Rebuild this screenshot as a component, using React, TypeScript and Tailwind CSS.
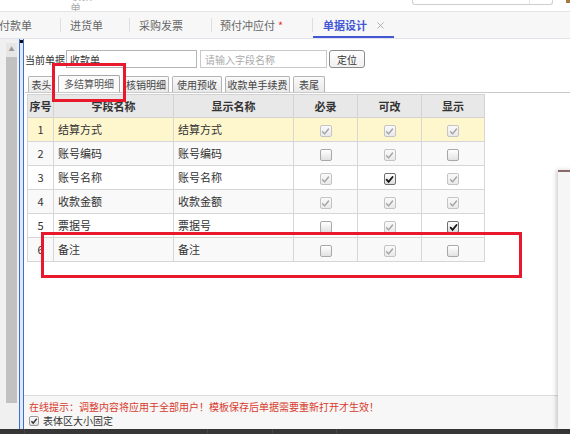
import { X } from "lucide-react";

type Cell = { on: boolean; dis: boolean };

const rows: { no: number; field: string; show: string; req: Cell; edit: Cell; vis: Cell }[] = [
  { no: 1, field: "结算方式", show: "结算方式", req: { on: true, dis: true }, edit: { on: true, dis: true }, vis: { on: true, dis: true } },
  { no: 2, field: "账号编码", show: "账号编码", req: { on: false, dis: false }, edit: { on: true, dis: true }, vis: { on: false, dis: false } },
  { no: 3, field: "账号名称", show: "账号名称", req: { on: true, dis: true }, edit: { on: true, dis: false }, vis: { on: true, dis: true } },
  { no: 4, field: "收款金额", show: "收款金额", req: { on: true, dis: true }, edit: { on: true, dis: true }, vis: { on: true, dis: true } },
  { no: 5, field: "票据号", show: "票据号", req: { on: false, dis: false }, edit: { on: true, dis: true }, vis: { on: true, dis: false } },
  { no: 6, field: "备注", show: "备注", req: { on: false, dis: false }, edit: { on: true, dis: true }, vis: { on: false, dis: false } },
];

const subTabs = [
  { label: "表头", w: "w-[27px]" },
  { label: "多结算明细", w: "w-[62px]", active: true },
  { label: "核销明细", w: "w-[46px]" },
  { label: "使用预收", w: "w-[50px]" },
  { label: "收款单手续费", w: "w-[65px]" },
  { label: "表尾", w: "w-[32px]" },
];

function Check({ on, dis }: Cell) {
  const box = dis
    ? "border-[#c4c4c4] from-[#fafafa] to-[#e9e9e9]"
    : on
      ? "border-[#6f6f6f] from-white to-[#dcdcdc]"
      : "border-[#a8a8a8] from-white to-[#e2e2e2]";
  return (
    <span
      className={`inline-flex h-[12px] w-[12px] items-center justify-center rounded-[2px] border bg-linear-to-b align-middle ${box}`}
    >
      {on && (
        <svg viewBox="0 0 10 10" className="h-[9px] w-[9px]">
          <path
            d="M1.8 5.2 L4 7.6 L8.4 2.2"
            fill="none"
            stroke={dis ? "#a0a0a0" : "#151515"}
            strokeWidth={dis ? 1.5 : 2}
            strokeLinecap="round"
          />
        </svg>
      )}
    </span>
  );
}

export default function App() {
  return (
    <div
      className="relative flex h-[434px] w-[570px] flex-col overflow-hidden bg-white text-[#333]"
      style={{ fontFamily: '"Noto Sans CJK SC", "Liberation Sans", sans-serif' }}
    >
      {/* top strip */}
      <div className="flex h-[12px] shrink-0 items-start overflow-hidden border-b border-[#e4e4e4] bg-white">
        <span className="ml-[70px] -mt-[11px] text-[11px] leading-[13px] text-[#aaa]">收款单</span>
        <div className="ml-[310px] flex h-[6px] w-[143px] -mt-px rounded-b-[3px] border border-t-0 border-[#cfcfcf]">
          <div className="ml-auto w-[23px] border-l border-[#e5e5e5]" />
        </div>
        <span className="ml-[13px] mt-0 h-[3px] w-[4px] bg-[#a07a40]" />
      </div>

      {/* top tab bar */}
      <div className="flex h-[27px] shrink-0 items-center border-b border-[#e2e2ea] bg-[#f7f7f7] text-[11px] text-[#666]">
        <div className="flex w-[61px] items-center border-r border-[#dedede] leading-[14px]">
          <span className="-ml-[1px]">付款单</span>
        </div>
        <div className="flex w-[69px] items-center border-r border-[#dedede] pl-[9px] leading-[14px]">进货单</div>
        <div className="flex w-[82px] items-center border-r border-[#dedede] pl-[9px] leading-[14px]">采购发票</div>
        <div className="flex w-[101px] items-center border-r border-[#dedede] pl-[8px] leading-[14px]">
          预付冲应付<span className="ml-[3px] text-[#e33]">*</span>
        </div>
        <div className="relative flex h-[27px] w-[81px] items-center pl-[10px]">
          <span className="font-bold text-[#4458d6]">单据设计</span>
          <X className="ml-[8px] h-[11px] w-[11px] text-[#aaa]" strokeWidth={2} />
          <div className="absolute bottom-[1px] left-0 h-[2px] w-[81px] bg-[#4458d6]" />
        </div>
      </div>

      {/* main */}
      <div className="flex min-h-0 flex-1">
        {/* scrollbar */}
        <div className="flex w-[19px] shrink-0 flex-col bg-[#f0f0f0] pl-[6px] pt-[4px]">
          <div className="flex h-[14px] w-[11px] items-start justify-center bg-[#e6e6e6] pt-[3px] text-[6px] leading-[6px] text-[#9a9a9a]">
            ▲
          </div>
          <div className="h-[346px] w-[11px] bg-[#c1c1c1]" />
        </div>
        {/* splitter */}
        <div className="flex w-[5px] shrink-0 flex-col border-x border-[#3d6fcf] bg-[#dde8f8]">
          <div className="mt-[1px] h-[3px] bg-[#111]" />
        </div>

        {/* content */}
        <div className="flex min-w-0 flex-1 flex-col">
          <div className="flex-1 bg-white pl-[1px] pt-[11px]">
            <div className="flex h-[18px] items-center text-[10px]">
              <span className="w-[41px]">当前单据</span>
              <div className="flex h-[18px] w-[131px] items-center border border-[#b5b5b5] pl-[3px] text-[10px]">收款单</div>
              <div className="ml-[3px] flex h-[18px] w-[127px] items-center border border-[#c9c9c9] pl-[4px] text-[10px] text-[#aaa]">
                请输入字段名称
              </div>
              <div className="ml-[2px] flex h-[18px] w-[36px] items-center justify-center rounded-[3px] border border-[#8c8c8c] bg-linear-to-b from-white to-[#f0f0f0] text-[10px]">
                定位
              </div>
            </div>

            <div className="mt-[8px] flex h-[17px] items-end gap-[3px] border-b border-[#c9c9c9] pl-[3px]">
              {subTabs.map((t) => (
                <div
                  key={t.label}
                  className={`flex ${t.w} items-center justify-center rounded-t-[2px] border border-b-0 text-[10px] leading-[14px] ${
                    t.active
                      ? "h-[17px] border-[#a8a8a8] bg-[#fafafa] text-[#555]"
                      : "h-[16px] border-[#b4b4b4] bg-linear-to-b from-[#fafafa] to-[#e9e9e9] text-[#444]"
                  }`}
                >
                  {t.label}
                </div>
              ))}
            </div>

            <table className="ml-[2px] mt-px border-collapse text-[11px]">
              <colgroup>
                <col className="w-[26px]" />
                <col className="w-[120px]" />
                <col className="w-[120px]" />
                <col className="w-[64px]" />
                <col className="w-[64px]" />
                <col className="w-[63px]" />
              </colgroup>
              <thead>
                <tr className="h-[23px] bg-[#e8e8e8] font-bold">
                  {["序号", "字段名称", "显示名称", "必录", "可改", "显示"].map((h) => (
                    <th key={h} className="border border-[#d2d2d2] p-0 text-center font-bold">
                      {h}
                    </th>
                  ))}
                </tr>
              </thead>
              <tbody>
                {rows.map((r) => (
                  <tr
                    key={r.no}
                    className={`h-[24px] ${r.no === 1 ? "bg-[#fef6cd]" : r.no % 2 === 0 ? "bg-[#f9f9f9]" : "bg-white"}`}
                  >
                    <td className="border border-[#d6d6d6] p-0 text-center">{r.no}</td>
                    <td className="border border-[#d6d6d6] py-0 pl-[4px]">{r.field}</td>
                    <td className="border border-[#d6d6d6] py-0 pl-[4px]">{r.show}</td>
                    <td className="border border-[#d6d6d6] p-0 text-center">
                      <Check {...r.req} />
                    </td>
                    <td className="border border-[#d6d6d6] p-0 text-center">
                      <Check {...r.edit} />
                    </td>
                    <td className="border border-[#d6d6d6] p-0 text-center">
                      <Check {...r.vis} />
                    </td>
                  </tr>
                ))}
              </tbody>
            </table>
          </div>

          {/* footer */}
          <div className="flex h-[34px] shrink-0 flex-col border-t border-[#dcdcdc] bg-[#f7f7f7] pl-[5px] pt-[3px] text-[10px]">
            <div className="leading-[15px] text-[#d83a2c]">
              在线提示：调整内容将应用于全部用户！模板保存后单据需要重新打开才生效！
            </div>
            <div className="flex items-center leading-[14px]">
              <span className="mr-[4px] inline-flex h-[10px] w-[10px] items-center justify-center rounded-[2px] border border-[#999] bg-linear-to-b from-white to-[#e0e0e0]">
                <svg viewBox="0 0 10 10" className="h-[8px] w-[8px]">
                  <path d="M1.8 5.2 L4 7.6 L8.4 2.2" fill="none" stroke="#333" strokeWidth="1.8" />
                </svg>
              </span>
              表体区大小固定
            </div>
          </div>
        </div>
      </div>

      {/* taskbar */}
      <div className="flex h-[5px] shrink-0 bg-[#363636]">
        <div className="w-[25px] border-r border-[#444]" />
        <div className="w-[183px] border-r border-[#444]" />
        <div className="w-[65px] border-r border-[#444]" />
        <div className="w-[64px] border-r border-[#444]" />
      </div>

      {/* overlapping window on the right */}
      <div className="absolute left-[558px] top-[170px] h-[259px] w-[20px] border-t-2 border-[#8b6a6a] bg-[#f6f6f6] shadow-[-2px_0_4px_rgba(0,0,0,0.18)]" />

      {/* red annotation boxes */}
      <div className="absolute left-[52px] top-[63px] h-[39px] w-[74px] border-[3px] border-[#e8192c]" />
      <div className="absolute left-[41px] top-[232px] h-[46px] w-[481px] border-[3px] border-[#e8192c]" />
    </div>
  );
}
